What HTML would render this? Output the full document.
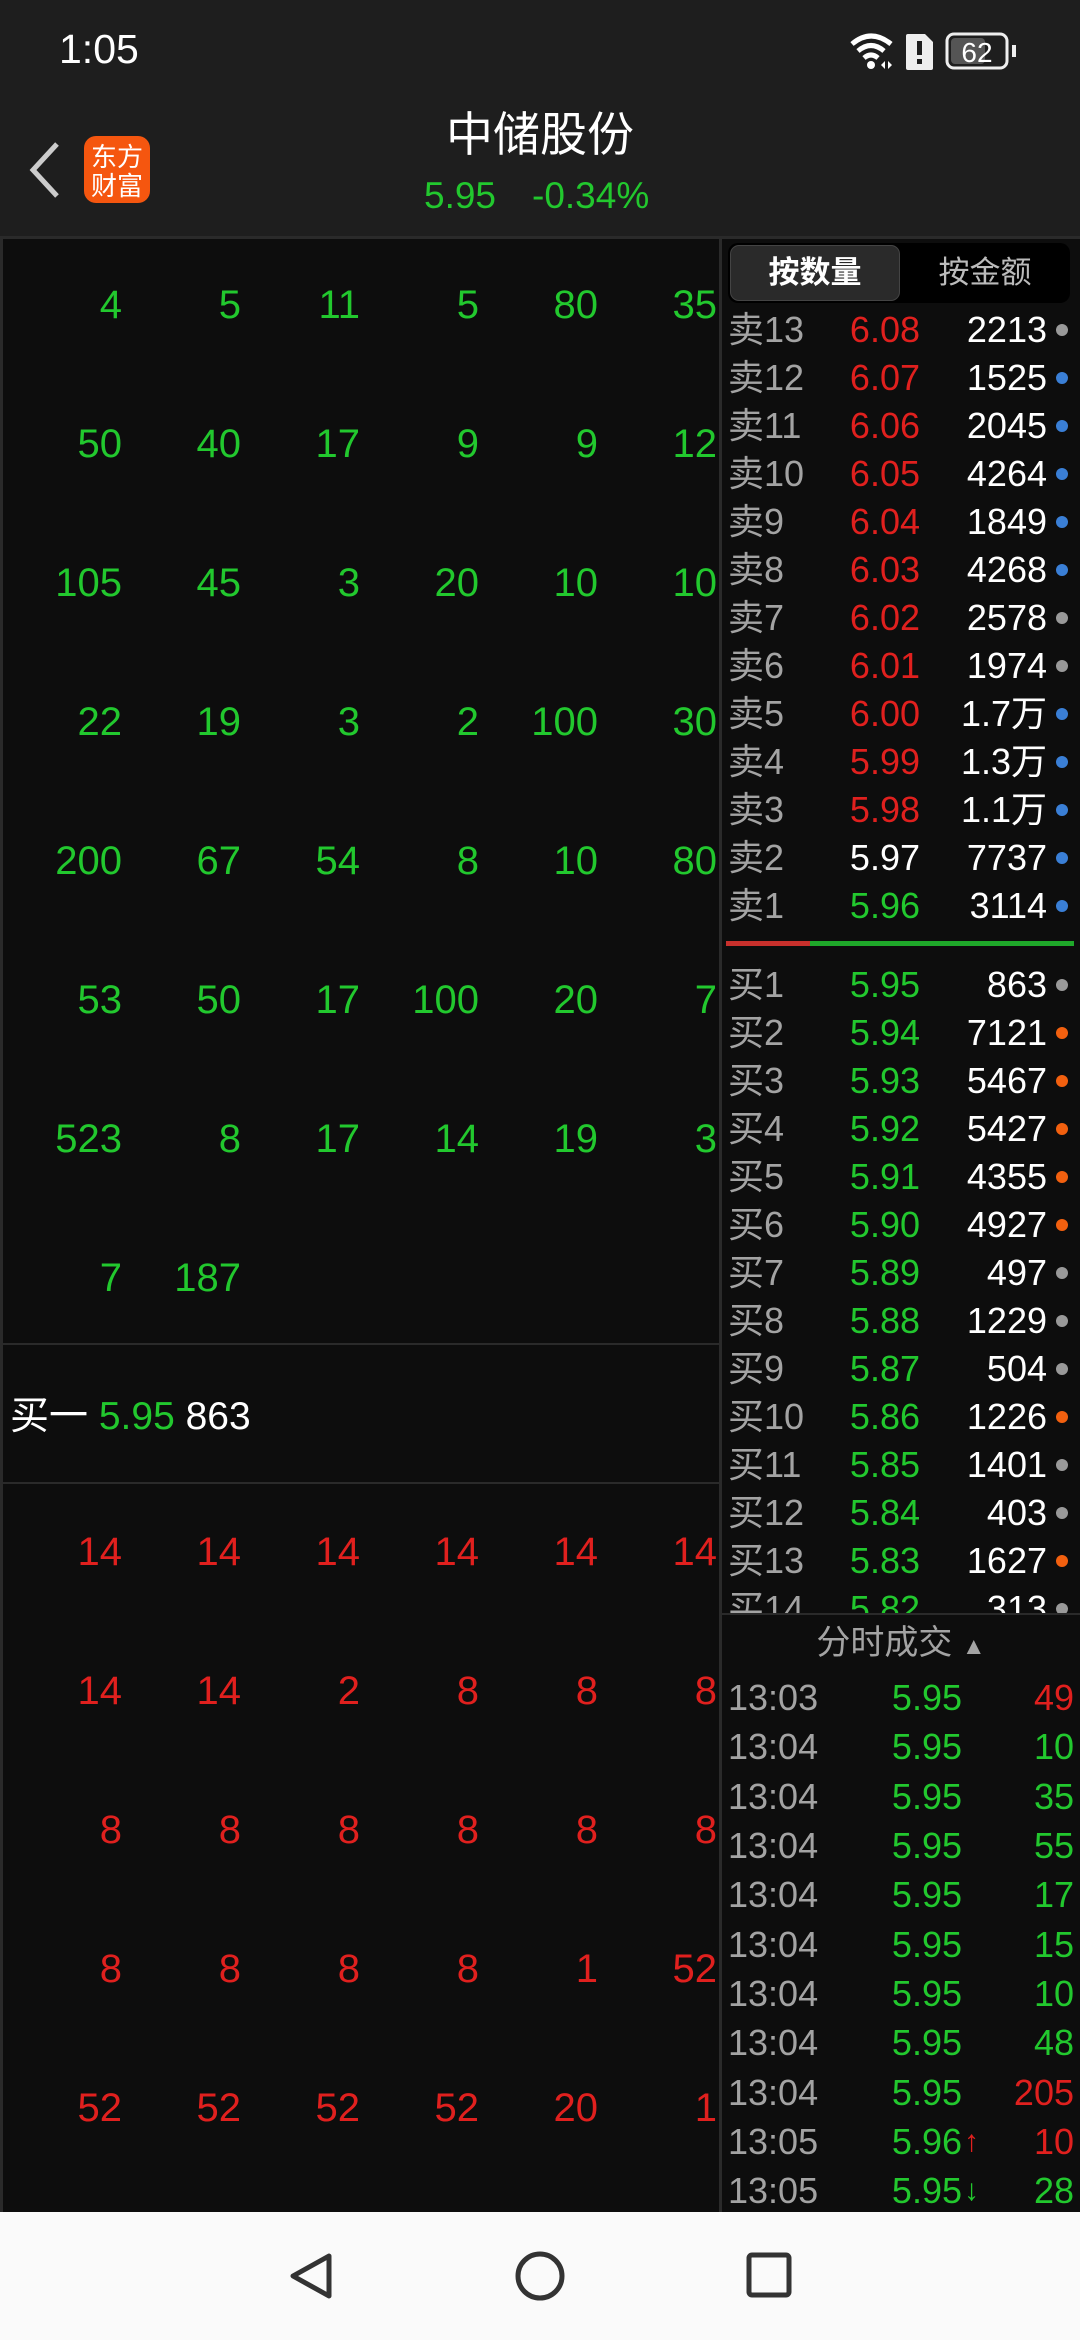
<!DOCTYPE html>
<html><head><meta charset="utf-8"><style>
*{margin:0;padding:0;box-sizing:border-box}
body{width:1080px;height:2340px;background:#0d0d0d;position:relative;overflow:hidden;font-family:"Liberation Sans","Noto Sans CJK SC",sans-serif;color:#fff}
.a{position:absolute}
.g{color:#22c82e}.r{color:#e0201e}.w{color:#fff}.gr{color:#a3a3a3}
.grid{position:absolute;left:3px;width:714px}
.row{display:flex;height:139px;align-items:center}
.row span{width:119px;text-align:right;font-size:40px}
.ob{position:absolute;left:728px;width:346px}
.ob div{height:48px;display:flex;align-items:center;font-size:36px;position:relative}
.ob span{line-height:48px;display:block}
.ob .l{width:80px;color:#a3a3a3;white-space:nowrap}
.ob .p{width:112px;text-align:right}
.ob .v{width:127px;text-align:right;color:#fff}
.ob i{position:absolute;left:328px;top:18px;width:12px;height:12px;border-radius:6px}
.gy{background:#999}.bl{background:#3a7fd6}.or{background:#f2600f}
.tr{position:absolute;left:728px;width:346px}
.tr div{height:49.3px;display:flex;align-items:center;font-size:36px;position:relative}
.tr span{line-height:49px}
.tr .t{width:120px;color:#a3a3a3}
.tr .p{width:114px;text-align:right;color:#22c82e;white-space:nowrap}
.tr .v{position:absolute;right:0}
.tr b{position:absolute;left:236px;font-weight:normal;font-size:30px;line-height:49px}
</style></head><body>
<div class="a" style="left:0;top:0;width:1080px;height:236px;background:#1e1e1e"></div>
<div class="a" style="left:59px;top:26px;font-size:41px;color:#fff">1:05</div>
<svg class="a" style="left:848px;top:30px" width="175" height="42" viewBox="0 0 175 42">
<path d="M4 14 Q23 -2 43 14" stroke="#fff" stroke-width="5" fill="none"/>
<path d="M10 21 Q23 10 36 21" stroke="#fff" stroke-width="5" fill="none"/>
<path d="M16 28 Q23 22 30 28" stroke="#fff" stroke-width="5" fill="none"/>
<circle cx="23" cy="35" r="4" fill="#fff"/>
<path d="M33 35 l4 -4 v8z M40 31 l4 4 l-4 4z" fill="#fff"/>
<path d="M60 4 h17 l8 8 v26 a2 2 0 0 1 -2 2 h-23 a2 2 0 0 1 -2 -2 v-32 a2 2 0 0 1 2 -2z" fill="#eee"/>
<rect x="69" y="11" width="5" height="14" fill="#1e1e1e"/><rect x="69" y="29" width="5" height="5" fill="#1e1e1e"/>
<rect x="99" y="4" width="60" height="34" rx="7" fill="none" stroke="#eee" stroke-width="3"/>
<rect x="103" y="8" width="34" height="26" rx="4" fill="#555"/>
<rect x="164" y="15" width="4" height="12" fill="#eee"/>
<text x="129" y="32" font-size="28" fill="#fff" text-anchor="middle" font-family="Liberation Sans">62</text>
</svg>
<svg class="a" style="left:24px;top:140px" width="40" height="60"><path d="M33 4 L9 30 L33 56" stroke="#ccc" stroke-width="5" fill="none"/></svg>
<div class="a" style="left:84px;top:136px;width:66px;height:67px;background:#f5560f;border-radius:12px;color:#fff;font-size:26px;line-height:29px;text-align:center;padding-top:5px;font-family:'Noto Sans CJK SC',sans-serif">东方<br>财富</div>
<div class="a" style="left:0;width:1080px;top:106px;text-align:center;font-size:47px;line-height:58px">中储股份</div>
<div class="a g" style="left:424px;top:175px;font-size:37px">5.95</div>
<div class="a g" style="left:532px;top:175px;font-size:37px">-0.34%</div>
<div class="a" style="left:0;top:236px;width:1080px;height:3px;background:#2a2a2a"></div>
<div class="a" style="left:719px;top:236px;width:3px;height:1976px;background:#2a2a2a"></div>
<div class="a" style="left:0;top:236px;width:3px;height:1976px;background:#2a2a2a"></div>
<div class="grid g" style="top:236px">
<div class="row"><span>4</span><span>5</span><span>11</span><span>5</span><span>80</span><span>35</span></div>
<div class="row"><span>50</span><span>40</span><span>17</span><span>9</span><span>9</span><span>12</span></div>
<div class="row"><span>105</span><span>45</span><span>3</span><span>20</span><span>10</span><span>10</span></div>
<div class="row"><span>22</span><span>19</span><span>3</span><span>2</span><span>100</span><span>30</span></div>
<div class="row"><span>200</span><span>67</span><span>54</span><span>8</span><span>10</span><span>80</span></div>
<div class="row"><span>53</span><span>50</span><span>17</span><span>100</span><span>20</span><span>7</span></div>
<div class="row"><span>523</span><span>8</span><span>17</span><span>14</span><span>19</span><span>3</span></div>
<div class="row"><span>7</span><span>187</span></div>
</div>
<div class="a" style="left:0;top:1343px;width:720px;height:2px;background:#2a2a2a"></div>
<div class="a" style="left:10px;top:1389px;font-size:39px;line-height:48px"><span style="font-family:'Noto Sans CJK SC'">买一</span> <span class="g">5.95</span> 863</div>
<div class="a" style="left:0;top:1482px;width:720px;height:2px;background:#2a2a2a"></div>
<div class="grid r" style="top:1483px">
<div class="row"><span>14</span><span>14</span><span>14</span><span>14</span><span>14</span><span>14</span></div>
<div class="row"><span>14</span><span>14</span><span>2</span><span>8</span><span>8</span><span>8</span></div>
<div class="row"><span>8</span><span>8</span><span>8</span><span>8</span><span>8</span><span>8</span></div>
<div class="row"><span>8</span><span>8</span><span>8</span><span>8</span><span>1</span><span>52</span></div>
<div class="row"><span>52</span><span>52</span><span>52</span><span>52</span><span>20</span><span>1</span></div>
</div>
<div class="a" style="left:728px;top:243px;width:342px;height:60px;background:#000;border-radius:10px"></div>
<div class="a" style="left:730px;top:245px;width:170px;height:56px;background:#2a2a2a;border-radius:9px;border:1px solid #444;text-align:center;font-size:31px;line-height:54px;font-weight:bold">按数量</div>
<div class="a gr" style="left:900px;top:245px;width:170px;height:56px;text-align:center;font-size:31px;line-height:56px;color:#bbb">按金额</div>
<div class="ob" style="top:306px">
<div><span class="l">卖13</span><span class="p r">6.08</span><span class="v">2213</span><i class="gy"></i></div>
<div><span class="l">卖12</span><span class="p r">6.07</span><span class="v">1525</span><i class="bl"></i></div>
<div><span class="l">卖11</span><span class="p r">6.06</span><span class="v">2045</span><i class="bl"></i></div>
<div><span class="l">卖10</span><span class="p r">6.05</span><span class="v">4264</span><i class="bl"></i></div>
<div><span class="l">卖9</span><span class="p r">6.04</span><span class="v">1849</span><i class="bl"></i></div>
<div><span class="l">卖8</span><span class="p r">6.03</span><span class="v">4268</span><i class="bl"></i></div>
<div><span class="l">卖7</span><span class="p r">6.02</span><span class="v">2578</span><i class="gy"></i></div>
<div><span class="l">卖6</span><span class="p r">6.01</span><span class="v">1974</span><i class="gy"></i></div>
<div><span class="l">卖5</span><span class="p r">6.00</span><span class="v">1.7万</span><i class="bl"></i></div>
<div><span class="l">卖4</span><span class="p r">5.99</span><span class="v">1.3万</span><i class="bl"></i></div>
<div><span class="l">卖3</span><span class="p r">5.98</span><span class="v">1.1万</span><i class="bl"></i></div>
<div><span class="l">卖2</span><span class="p w">5.97</span><span class="v">7737</span><i class="bl"></i></div>
<div><span class="l">卖1</span><span class="p g">5.96</span><span class="v">3114</span><i class="bl"></i></div>
</div>
<div class="a" style="left:726px;top:941px;width:84px;height:5px;background:#c8302c"></div>
<div class="a" style="left:810px;top:941px;width:264px;height:5px;background:#1fa82a"></div>
<div class="a" style="left:722px;top:961px;width:358px;height:652px;overflow:hidden">
<div class="ob" style="top:0;left:6px">
<div><span class="l">买1</span><span class="p g">5.95</span><span class="v">863</span><i class="gy"></i></div>
<div><span class="l">买2</span><span class="p g">5.94</span><span class="v">7121</span><i class="or"></i></div>
<div><span class="l">买3</span><span class="p g">5.93</span><span class="v">5467</span><i class="or"></i></div>
<div><span class="l">买4</span><span class="p g">5.92</span><span class="v">5427</span><i class="or"></i></div>
<div><span class="l">买5</span><span class="p g">5.91</span><span class="v">4355</span><i class="or"></i></div>
<div><span class="l">买6</span><span class="p g">5.90</span><span class="v">4927</span><i class="or"></i></div>
<div><span class="l">买7</span><span class="p g">5.89</span><span class="v">497</span><i class="gy"></i></div>
<div><span class="l">买8</span><span class="p g">5.88</span><span class="v">1229</span><i class="gy"></i></div>
<div><span class="l">买9</span><span class="p g">5.87</span><span class="v">504</span><i class="gy"></i></div>
<div><span class="l">买10</span><span class="p g">5.86</span><span class="v">1226</span><i class="or"></i></div>
<div><span class="l">买11</span><span class="p g">5.85</span><span class="v">1401</span><i class="gy"></i></div>
<div><span class="l">买12</span><span class="p g">5.84</span><span class="v">403</span><i class="gy"></i></div>
<div><span class="l">买13</span><span class="p g">5.83</span><span class="v">1627</span><i class="or"></i></div>
<div><span class="l">买14</span><span class="p g">5.82</span><span class="v">313</span><i class="gy"></i></div>
</div></div>
<div class="a" style="left:722px;top:1613px;width:358px;height:2px;background:#2a2a2a"></div>
<div class="a gr" style="left:722px;top:1620px;width:358px;text-align:center;font-size:34px;line-height:46px">分时成交 <span style="font-size:24px">▲</span></div>
<div class="tr" style="top:1673px">
<div><span class="t">13:03</span><span class="p">5.95</span><span class="v r">49</span></div>
<div><span class="t">13:04</span><span class="p">5.95</span><span class="v g">10</span></div>
<div><span class="t">13:04</span><span class="p">5.95</span><span class="v g">35</span></div>
<div><span class="t">13:04</span><span class="p">5.95</span><span class="v g">55</span></div>
<div><span class="t">13:04</span><span class="p">5.95</span><span class="v g">17</span></div>
<div><span class="t">13:04</span><span class="p">5.95</span><span class="v g">15</span></div>
<div><span class="t">13:04</span><span class="p">5.95</span><span class="v g">10</span></div>
<div><span class="t">13:04</span><span class="p">5.95</span><span class="v g">48</span></div>
<div><span class="t">13:04</span><span class="p">5.95</span><span class="v r">205</span></div>
<div><span class="t">13:05</span><span class="p">5.96</span><b class="r">↑</b><span class="v r">10</span></div>
<div><span class="t">13:05</span><span class="p">5.95</span><b class="g">↓</b><span class="v g">28</span></div>
</div>
<div class="a" style="left:0;top:2212px;width:1080px;height:128px;background:#fafafa"></div>
<svg class="a" style="left:280px;top:2250px" width="540" height="52">
<path d="M49 6 L49 46 L13 26 Z" stroke="#333" stroke-width="5" fill="none" stroke-linejoin="round"/>
<circle cx="260" cy="26" r="22" stroke="#333" stroke-width="5" fill="none"/>
<rect x="469" y="5" width="40" height="40" rx="3" stroke="#333" stroke-width="5" fill="none"/>
</svg>
</body></html>
